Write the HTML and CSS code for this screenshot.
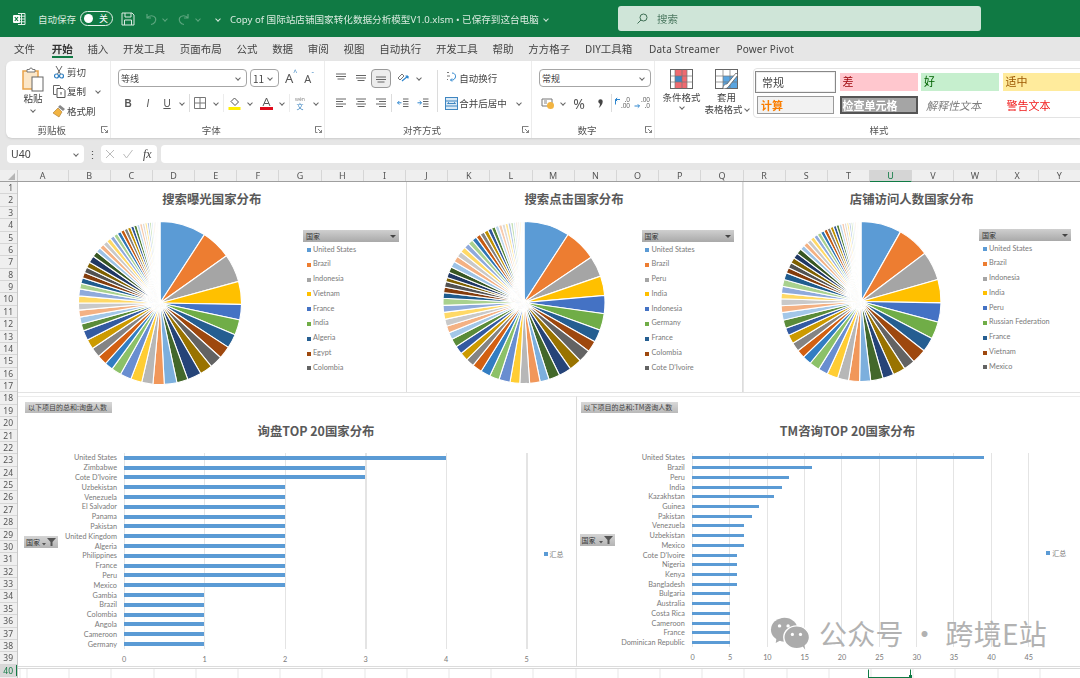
FILE: index.html
```html
<!DOCTYPE html>
<html lang="zh-CN">
<head>
<meta charset="utf-8">
<title>Excel</title>
<link rel="stylesheet" href="styles.css">
</head>
<body>
<div class="app">
  <header class="titlebar">
    <svg class="xl-icon" viewBox="0 0 14 14"><path d="M6 1.5h7v11H6M6 4.2h7M6 7h7M6 9.8h7M9.5 1.5v11" fill="none" stroke="#e3f0e8" stroke-width="1"/><rect x="1" y="3" width="7" height="8" rx="1" fill="#fff"/><path d="M2.8 5l3.2 4M6 5L2.8 9" stroke="#107c41" stroke-width="1.2"/></svg>
    <span class="autosave">自动保存</span>
    <span class="toggle"><i class="knob"></i><b>关</b></span>
    <svg class="save" viewBox="0 0 14 14"><path d="M1 1h10l2 2v10H1zM4 1v4h6V1M3.5 13V8h7v5" fill="none" stroke="#dcebe2" stroke-width="1"/></svg>
    <svg class="undo" viewBox="0 0 14 14"><path d="M3 2v4h4M3.2 6C5 3 10 3 11.5 6c1 3-1 6-4.500 6.500" fill="none" stroke="#5da67f" stroke-width="1.200"/></svg>
    <i class="mini-chev dim"></i>
    <svg class="redo" viewBox="0 0 14 14"><path d="M11 2v4H7M10.800 6C9 3 4 3 2.500 6c-1 3 1 6 4.500 6.500" fill="none" stroke="#5da67f" stroke-width="1.200"/></svg>
    <i class="mini-chev dim"></i>
    <span class="qa-more"><i class="mini-chev"></i></span>
    <span class="doc-title">Copy of 国际站店铺国家转化数据分析模型V1.0.xlsm • 已保存到这台电脑</span>
    <i class="mini-chev title-chev"></i>
    <div class="search">
      <svg class="search-ic" viewBox="0 0 12 12"><circle cx="7.500" cy="4.500" r="3.500" fill="none" stroke="#3f6f55" stroke-width="1"/><path d="M5 7L1.500 10.500" stroke="#3f6f55" stroke-width="1"/></svg>
      <span>搜索</span>
    </div>
  </header>

  <nav class="tabs">
    <span>文件</span><span class="active">开始</span><span>插入</span><span>开发工具</span><span>页面布局</span><span>公式</span><span>数据</span><span>审阅</span><span>视图</span><span>自动执行</span><span>开发工具</span><span>帮助</span><span>方方格子</span><span>DIY工具箱</span><span class="latin">Data Streamer</span><span class="latin">Power Pivot</span>
  </nav>

  <section class="ribbon">
    <div class="group g-clip">
      <div class="clip-body">
        <div class="paste">
          <svg class="paste-ic" viewBox="0 0 22 25"><path d="M1 4h15v18H1z" fill="#fbe6c8" stroke="#e8a24a" stroke-width="1.500"/><path d="M5 5V2.500h2.500a1.500 1.500 0 0 1 3 0H13V5z" fill="#fff" stroke="#777"/><rect x="10" y="10" width="11" height="14" fill="#fff" stroke="#666"/></svg>
          <span>粘贴</span>
          <i class="mini-chev"></i>
        </div>
        <div class="clip-list">
          <div class="clip-row"><svg class="ic14" viewBox="0 0 14 14"><path d="M4 1l4.500 8M10 1L5.500 9" stroke="#666" fill="none"/><circle cx="4.500" cy="11" r="2" fill="none" stroke="#2f7fc1" stroke-width="1.200"/><circle cx="9.500" cy="11" r="2" fill="none" stroke="#2f7fc1" stroke-width="1.200"/></svg><span>剪切</span></div>
          <div class="clip-row"><svg class="ic14" viewBox="0 0 14 14"><path d="M1.500 1.500h6l1 1v2M1.500 1.500v9h3" fill="none" stroke="#666"/><path d="M5 4.500h6l2 2v7H5z" fill="#fff" stroke="#555"/><path d="M8 9h2M9 8v3" stroke="#888"/></svg><span>复制</span><i class="mini-chev copy-chev"></i></div>
          <div class="clip-row"><svg class="ic14" viewBox="0 0 14 14"><path d="M8 1l5 4-2 2-5-4z" fill="#888"/><path d="M6 4l4 4-3 5-6-4z" fill="#f2b441" stroke="#a8752a" stroke-width=".6"/></svg><span>格式刷</span></div>
        </div>
      </div>
      <div class="grp-foot">剪贴板</div>
      <svg class="launcher" viewBox="0 0 7 7"><path d="M.5 3V.5h6M.5 .5v6h2M3 3l3.500 3.500M6.500 4v2.500H4" fill="none" stroke="#666" stroke-width=".8"/></svg>
    </div>

    <div class="group g-font">
      <div class="row1">
        <div class="select font-select"><span>等线</span><i class="mini-chev"></i></div>
        <div class="select size-select"><span>11</span><i class="mini-chev"></i></div>
        <span class="grow-a">A<sup>^</sup></span>
        <span class="shrink-a">A<sup>ˇ</sup></span>
      </div>
      <div class="row2">
        <span class="tool fmt bold">B</span>
        <span class="tool fmt italic">I</span>
        <span class="tool fmt under narrow">U</span>
        <span class="chev-box"><i class="mini-chev"></i></span>
        <i class="vsep"></i>
        <span class="tool"><svg class="ic12" viewBox="0 0 12 12"><path d="M.5 .5h11v11H.5zM.5 6h11M6 .5v11" fill="none" stroke="#777"/></svg></span>
        <span class="chev-box"><i class="mini-chev"></i></span>
        <i class="vsep faint"></i>
        <span class="tool"><svg class="ic13" viewBox="0 0 13 13"><path d="M6.500 1l4 4-3.500 3.500-4-4z" fill="#fff" stroke="#555"/><rect x=".5" y="10" width="12" height="3" fill="#ffee00"/></svg></span>
        <span class="chev-box"><i class="mini-chev"></i></span>
        <span class="tool"><svg class="ic13" viewBox="0 0 13 13"><path d="M3 9l3.500-8L10 9M4.200 6.500h4.600" fill="none" stroke="#555"/><rect x="0" y="10" width="13" height="3" fill="#e00b1c"/></svg></span>
        <span class="chev-box"><i class="mini-chev"></i></span>
        <i class="vsep faint"></i>
        <span class="tool wen"><small>wén</small><b>文</b></span>
        <span class="chev-box"><i class="mini-chev"></i></span>
      </div>
      <div class="grp-foot">字体</div>
      <svg class="launcher" viewBox="0 0 7 7"><path d="M.5 3V.5h6M.5 .5v6h2M3 3l3.500 3.500M6.500 4v2.500H4" fill="none" stroke="#666" stroke-width=".8"/></svg>
    </div>

    <div class="group g-align">
      <div class="align-body">
        <div class="align-left">
          <div class="row1 tight">
            <span class="tool"><svg class="ic12" viewBox="0 0 12 10"><path d="M1 1h10M1 3.500h10M2.500 6h7" stroke="#666"/></svg></span>
            <span class="tool"><svg class="ic12" viewBox="0 0 12 10"><path d="M1 2.500h10M1 5h10M2.500 7.500h7" stroke="#666"/></svg></span>
            <span class="tool on"><svg class="ic12" viewBox="0 0 12 10"><path d="M1 4h10M1 6.500h10M2.500 9h7" stroke="#666"/></svg></span>
            <i class="vsep clear"></i>
            <span class="tool"><svg class="ic14" viewBox="0 0 14 14"><path d="M2 7l4-4 2 2-4 4z" fill="none" stroke="#777"/><path d="M6 10l6-5M12 5H9.500M12 5v2.500" stroke="#2f87cf" fill="none" stroke-width="1.200"/></svg></span>
            <span class="chev-box"><i class="mini-chev"></i></span>
          </div>
          <div class="row2">
            <span class="tool"><svg class="ic12" viewBox="0 0 12 10"><path d="M1 1h10M1 3.500h7M1 6h10M1 8.500h7" stroke="#666"/></svg></span>
            <span class="tool"><svg class="ic12" viewBox="0 0 12 10"><path d="M1 1h10M2.500 3.500h7M1 6h10M2.500 8.500h7" stroke="#666"/></svg></span>
            <span class="tool"><svg class="ic12" viewBox="0 0 12 10"><path d="M1 1h10M4 3.500h7M1 6h10M4 8.500h7" stroke="#666"/></svg></span>
            <i class="vsep"></i>
            <span class="tool"><svg class="ic12" viewBox="0 0 12 10"><path d="M6 1h5.500M6 3.500h5.500M6 6h5.500M6 8.500h5.500" stroke="#666"/><path d="M4.500 4.800H.5M2.300 3L.5 4.800l1.800 1.800" stroke="#2f87cf" fill="none"/></svg></span>
            <span class="tool"><svg class="ic12" viewBox="0 0 12 10"><path d="M6 1h5.500M6 3.500h5.500M6 6h5.500M6 8.500h5.500" stroke="#666"/><path d="M.5 4.800h4M2.700 3l1.800 1.800-1.800 1.800" stroke="#2f87cf" fill="none"/></svg></span>
          </div>
        </div>
        <i class="vsep tall"></i>
        <div class="align-right">
          <div class="row1 tight">
            <span class="tool"><svg class="ic14" viewBox="0 0 14 14"><path d="M3 1.500h2M3 5h3M3 8.500h1" stroke="#777"/><path d="M8 2c4 0 5 5 1 7H6.500M8 7.500L6.500 9 8 10.500" fill="none" stroke="#2f87cf"/></svg></span>
            <span class="cmd">自动换行</span>
          </div>
          <div class="row2">
            <span class="tool"><svg class="ic13" viewBox="0 0 13 13"><rect x=".5" y=".5" width="12" height="12" fill="#dbeaf6" stroke="#3f86c1"/><path d="M.5 4h12M.5 9h12" stroke="#3f86c1"/><path d="M2.500 6.500h8M2.500 6.500l1.500-1.200M10.500 6.500L9 5.300" stroke="#3f86c1" fill="none"/></svg></span>
            <span class="cmd">合并后居中</span>
            <span class="chev-box merge-chev"><i class="mini-chev"></i></span>
          </div>
        </div>
      </div>
      <div class="grp-foot">对齐方式</div>
      <svg class="launcher" viewBox="0 0 7 7"><path d="M.5 3V.5h6M.5 .5v6h2M3 3l3.500 3.500M6.500 4v2.500H4" fill="none" stroke="#666" stroke-width=".8"/></svg>
    </div>

    <div class="group g-num">
      <div class="row1">
        <div class="select num-select"><span>常规</span><i class="mini-chev"></i></div>
      </div>
      <div class="row2">
        <span class="tool"><svg class="ic14" viewBox="0 0 14 14"><path d="M1 3h10v7H1z" fill="#fff" stroke="#777"/><path d="M3 5h3M3 7h3" stroke="#888"/><circle cx="9.500" cy="9.500" r="3.500" fill="#f2b441"/></svg></span>
        <span class="chev-box slim"><i class="mini-chev"></i></span>
        <span class="tool percent">%</span>
        <span class="tool"><svg class="comma-ic" viewBox="0 0 8 12"><path d="M1.500 3.500a2.500 2.500 0 1 1 5 0c0 3-1.500 5.500-4.500 7.500 1-2 1.500-3 1.300-4.800C2.300 6 1.500 5 1.500 3.500z" fill="#444"/></svg></span>
        <i class="vsep"></i>
        <span class="tool dec"><svg class="arrow-ic" viewBox="0 0 7 12"><path d="M6 2.500H1.500M3.200 .8L1.500 2.500l1.700 1.700M1.500 2.500v5" fill="none" stroke="#2f87cf"/></svg><b>.0<br>.00</b></span>
        <span class="tool dec"><svg class="arrow-ic" viewBox="0 0 7 12"><path d="M.5 9h5M3.800 7.300L5.500 9l-1.700 1.700" fill="none" stroke="#2f87cf"/></svg><b>.00<br>.0</b></span>
      </div>
      <div class="grp-foot">数字</div>
      <svg class="launcher" viewBox="0 0 7 7"><path d="M.5 3V.5h6M.5 .5v6h2M3 3l3.500 3.500M6.500 4v2.500H4" fill="none" stroke="#666" stroke-width=".8"/></svg>
    </div>

    <div class="group g-style">
      <div class="style-body">
        <div class="big-btn">
          <svg class="big-ic" viewBox="0 0 23 20"><rect x=".5" y=".5" width="22" height="19" fill="#fff" stroke="#666"/><path d="M5 1h12v6H5zM5 13h12v6H5zM12 7h5v6h-5z" fill="#ef6a70"/><rect x="5" y="7" width="7" height="6" fill="#3f86c1"/><path d="M5 .5v19M12 .5v19M17 .5v19M.5 7h22M.5 13h22" stroke="#777" stroke-width=".7"/></svg>
          <span>条件格式</span>
          <i class="mini-chev"></i>
        </div>
        <div class="big-btn">
          <svg class="big-ic" viewBox="0 0 23 20"><rect x=".5" y=".5" width="22" height="19" fill="#fff" stroke="#666"/><path d="M8 7h14v12H8z" fill="#5aa5e0"/><path d="M8 .5v19M15 .5v19M.5 7h22M.5 13h22" stroke="#777" stroke-width=".7"/><path d="M8 20c0-4 2-5 4-5l9-11 2 2-9 11c-1 2-3 3-6 3z" fill="#fff" stroke="#555" stroke-width=".7"/></svg>
          <span>套用</span>
          <span class="with-chev">表格格式<i class="mini-chev"></i></span>
        </div>
        <div class="gallery">
          <div class="sty normal">常规</div>
          <div class="sty bad">差</div>
          <div class="sty good">好</div>
          <div class="sty neutral">适中</div>
          <div class="sty calc">计算</div>
          <div class="sty check">检查单元格</div>
          <div class="sty explain">解释性文本</div>
          <div class="sty warn">警告文本</div>
        </div>
      </div>
      <div class="grp-foot style-foot">样式</div>
    </div>
  </section>

  <section class="formula">
    <div class="namebox"><span>U40</span><i class="mini-chev"></i></div>
    <span class="fdots">⋮</span>
    <div class="fbtns">
      <svg class="ic10" viewBox="0 0 10 10"><path d="M1 1l8 8M9 1L1 9" stroke="#bbb"/></svg>
      <svg class="ic10" viewBox="0 0 10 10"><path d="M.5 5l3 4L9.500 1" stroke="#bbb" fill="none"/></svg>
      <span class="fx">fx</span>
    </div>
    <div class="finput"></div>
  </section>

  <section class="sheet">
    <div class="colhead">
      <div class="corner"><i></i></div>
      <span class="col-a">A</span><span>B</span><span>C</span><span>D</span><span>E</span><span>F</span><span>G</span><span>H</span><span>I</span><span>J</span><span>K</span><span>L</span><span>M</span><span>N</span><span>O</span><span>P</span><span>Q</span><span>R</span><span>S</span><span>T</span><span class="col-sel">U</span><span>V</span><span>W</span><span>X</span><span>Y</span>
    </div>
    <div class="sheet-body">
      <div class="rowhead">
        <span>1</span><span>2</span><span>3</span><span>4</span><span>5</span><span>6</span><span>7</span><span>8</span><span>9</span><span>10</span><span>11</span><span>12</span><span>13</span><span>14</span><span>15</span><span>16</span><span>17</span><span>18</span><span>19</span><span>20</span><span>21</span><span>22</span><span>23</span><span>24</span><span>25</span><span>26</span><span>27</span><span>28</span><span>29</span><span>30</span><span>31</span><span>32</span><span>33</span><span>34</span><span>35</span><span>36</span><span>37</span><span>38</span><span>39</span><span class="row-sel">40</span>
      </div>
      <div class="canvas">
        <div class="pies">
          <article class="pie-panel wide">
            <h2>搜索曝光国家分布</h2>
            <div class="pie-body">
              <svg class="pie" id="pie1" viewBox="0 0 164 164"></svg>
              <div class="legend">
                <div class="legend-head"><span>国家</span><i class="tri"></i></div>
                <ul>
                  <li class="c0">United States</li><li class="c1">Brazil</li><li class="c2">Indonesia</li><li class="c3">Vietnam</li><li class="c4">France</li><li class="c5">India</li><li class="c6">Algeria</li><li class="c7">Egypt</li><li class="c8">Colombia</li>
                </ul>
              </div>
            </div>
          </article>
          <article class="pie-panel mid">
            <h2>搜索点击国家分布</h2>
            <div class="pie-body">
              <svg class="pie" id="pie2" viewBox="0 0 164 164"></svg>
              <div class="legend">
                <div class="legend-head"><span>国家</span><i class="tri"></i></div>
                <ul>
                  <li class="c0">United States</li><li class="c1">Brazil</li><li class="c2">Peru</li><li class="c3">India</li><li class="c4">Indonesia</li><li class="c5">Germany</li><li class="c6">France</li><li class="c7">Colombia</li><li class="c8">Cote D'Ivoire</li>
                </ul>
              </div>
            </div>
          </article>
          <article class="pie-panel last">
            <h2>店铺访问人数国家分布</h2>
            <div class="pie-body">
              <svg class="pie" id="pie3" viewBox="0 0 164 164"></svg>
              <div class="legend">
                <div class="legend-head"><span>国家</span><i class="tri"></i></div>
                <ul>
                  <li class="c0">United States</li><li class="c1">Brazil</li><li class="c2">Indonesia</li><li class="c3">India</li><li class="c4">Peru</li><li class="c5">Russian Federation</li><li class="c6">France</li><li class="c7">Vietnam</li><li class="c8">Mexico</li>
                </ul>
              </div>
            </div>
          </article>
        </div>

        <div class="bars">
          <article class="bar-panel inquiry">
            <div class="field-btn">以下项目的总和:询盘人数</div>
            <h2>询盘TOP 20国家分布</h2>
            <div class="bar-chart">
              <div class="filter-btn"><span>国家</span><svg class="funnel" viewBox="0 0 14 8"><path d="M0 5h4L2 7.500zM5 0h9L10.500 4v4h-2V4z" fill="#555"/></svg></div>
              <div class="plot">
                <ul class="bar-list">
                  <li><span>United States</span><b><i style="--v:4"></i></b></li>
                  <li><span>Zimbabwe</span><b><i style="--v:3"></i></b></li>
                  <li><span>Cote D'Ivoire</span><b><i style="--v:3"></i></b></li>
                  <li><span>Uzbekistan</span><b><i style="--v:2"></i></b></li>
                  <li><span>Venezuela</span><b><i style="--v:2"></i></b></li>
                  <li><span>El Salvador</span><b><i style="--v:2"></i></b></li>
                  <li><span>Panama</span><b><i style="--v:2"></i></b></li>
                  <li><span>Pakistan</span><b><i style="--v:2"></i></b></li>
                  <li><span>United Kingdom</span><b><i style="--v:2"></i></b></li>
                  <li><span>Algeria</span><b><i style="--v:2"></i></b></li>
                  <li><span>Philippines</span><b><i style="--v:2"></i></b></li>
                  <li><span>France</span><b><i style="--v:2"></i></b></li>
                  <li><span>Peru</span><b><i style="--v:2"></i></b></li>
                  <li><span>Mexico</span><b><i style="--v:2"></i></b></li>
                  <li><span>Gambia</span><b><i style="--v:1"></i></b></li>
                  <li><span>Brazil</span><b><i style="--v:1"></i></b></li>
                  <li><span>Colombia</span><b><i style="--v:1"></i></b></li>
                  <li><span>Angola</span><b><i style="--v:1"></i></b></li>
                  <li><span>Cameroon</span><b><i style="--v:1"></i></b></li>
                  <li><span>Germany</span><b><i style="--v:1"></i></b></li>
                </ul>
                <div class="ticks"><span>0</span><span>1</span><span>2</span><span>3</span><span>4</span><span>5</span></div>
              </div>
              <div class="bar-legend"><i></i>汇总</div>
            </div>
          </article>
          <article class="bar-panel tm">
            <div class="field-btn">以下项目的总和:TM咨询人数</div>
            <h2>TM咨询TOP 20国家分布</h2>
            <div class="bar-chart">
              <div class="filter-btn"><span>国家</span><svg class="funnel" viewBox="0 0 14 8"><path d="M0 5h4L2 7.500zM5 0h9L10.500 4v4h-2V4z" fill="#555"/></svg></div>
              <div class="plot">
                <ul class="bar-list">
                  <li><span>United States</span><b><i style="--v:39"></i></b></li>
                  <li><span>Brazil</span><b><i style="--v:16"></i></b></li>
                  <li><span>Peru</span><b><i style="--v:13"></i></b></li>
                  <li><span>India</span><b><i style="--v:12"></i></b></li>
                  <li><span>Kazakhstan</span><b><i style="--v:11"></i></b></li>
                  <li><span>Guinea</span><b><i style="--v:9"></i></b></li>
                  <li><span>Pakistan</span><b><i style="--v:8"></i></b></li>
                  <li><span>Venezuela</span><b><i style="--v:7"></i></b></li>
                  <li><span>Uzbekistan</span><b><i style="--v:7"></i></b></li>
                  <li><span>Mexico</span><b><i style="--v:7"></i></b></li>
                  <li><span>Cote D'Ivoire</span><b><i style="--v:6"></i></b></li>
                  <li><span>Nigeria</span><b><i style="--v:6"></i></b></li>
                  <li><span>Kenya</span><b><i style="--v:6"></i></b></li>
                  <li><span>Bangladesh</span><b><i style="--v:6"></i></b></li>
                  <li><span>Bulgaria</span><b><i style="--v:5"></i></b></li>
                  <li><span>Australia</span><b><i style="--v:5"></i></b></li>
                  <li><span>Costa Rica</span><b><i style="--v:5"></i></b></li>
                  <li><span>Cameroon</span><b><i style="--v:5"></i></b></li>
                  <li><span>France</span><b><i style="--v:5"></i></b></li>
                  <li><span>Dominican Republic</span><b><i style="--v:5"></i></b></li>
                </ul>
                <div class="ticks"><span>0</span><span>5</span><span>10</span><span>15</span><span>20</span><span>25</span><span>30</span><span>35</span><span>40</span><span>45</span></div>
              </div>
              <div class="bar-legend"><i></i>汇总</div>
            </div>
          </article>
        </div>

        <div class="row40"><div class="cell-sel"><i></i></div></div>

        <div class="watermark">
          <svg class="wechat" viewBox="0 0 42 34"><ellipse cx="15" cy="13" rx="14" ry="12.500" fill="#ababab"/><path d="M7 21l-1 6 7-4z" fill="#ababab"/><ellipse cx="28" cy="21" rx="13.500" ry="12" fill="#ababab" stroke="#fff" stroke-width="1.500"/><path d="M34 30l3 4-1-6z" fill="#ababab"/><circle cx="10" cy="9" r="1.800" fill="#fff"/><circle cx="19" cy="9" r="1.800" fill="#fff"/><circle cx="23.500" cy="18" r="1.700" fill="#fff"/><circle cx="32" cy="18" r="1.700" fill="#fff"/></svg>
          <span>公众号 · 跨境E站</span>
        </div>
      </div>
    </div>
  </section>
</div>
<script src="script.js"></script>
</body>
</html>
```
FILE: styles.css
```css
* { box-sizing: border-box; margin: 0; padding: 0; }
html, body { width: 1080px; height: 678px; overflow: hidden; }
body { font-family: "Noto Sans CJK SC", "Noto Sans", sans-serif; background: #e6e6e6; color: #444; font-size: 10px; }
ul { list-style: none; }
.app { width: 1080px; height: 678px; overflow: hidden; display: flex; flex-direction: column; filter: blur(.3px); }

.mini-chev { display: inline-block; width: 4px; height: 4px; border-right: 1px solid #666; border-bottom: 1px solid #666; transform: rotate(45deg); flex: none; }

/* title bar */
.titlebar { height: 37px; flex: none; background: #107a44; color: #d9eadf; display: flex; align-items: center; padding-left: 12px; }
.xl-icon { width: 14px; height: 14px; }
.autosave { margin-left: 12px; width: 38px; font-size: 9.5px; white-space: nowrap; }
.toggle { margin-left: 4px; width: 33px; height: 15px; border: 1px solid #e6f2ea; border-radius: 8px; display: flex; align-items: center; justify-content: space-between; padding: 0 4px 0 3px; }
.knob { width: 9px; height: 9px; border-radius: 50%; background: #fff; }
.toggle b { font-weight: 400; font-size: 9px; color: #fff; }
.save { width: 14px; height: 14px; margin-left: 8px; }
.undo { width: 14px; height: 14px; margin-left: 9px; }
.redo { width: 14px; height: 14px; margin-left: 10px; }
.mini-chev.dim { border-color: #5da67f; margin-left: 5px; }
.qa-more { margin-left: 14px; width: 8px; display: flex; justify-content: center; }
.qa-more .mini-chev { border-color: #d9eadf; }
.doc-title { margin-left: 8px; font-size: 9.6px; white-space: nowrap; font-family: "Noto Sans", "Noto Sans CJK SC", sans-serif; }
.title-chev { border-color: #cfe5d8; margin-left: 5px; }
.search { position: absolute; left: 618px; top: 6px; width: 363px; height: 25px; background: #cfe5d8; border-radius: 3px; display: flex; align-items: center; padding-left: 18px; color: #4d7a62; font-size: 10.5px; }
.search-ic { width: 12px; height: 12px; margin-right: 9px; }

/* tabs */
.tabs { height: 23px; flex: none; display: flex; align-items: center; gap: 14.7px; padding-left: 14px; font-size: 10.5px; color: #444; white-space: nowrap; }
.tabs span { position: relative; }
.tabs .active { font-weight: 700; color: #333; margin-left: 2px; }
.tabs .active::after { content: ""; position: absolute; left: 0; right: 0; bottom: -2px; height: 2px; background: #107a44; }
.tabs .latin { font-family: "Noto Sans", sans-serif; font-size: 10px; margin-left: 2px; letter-spacing: .2px; }

/* ribbon */
.ribbon { margin: 1px 0 0 6px; height: 77px; flex: none; background: #fff; border-radius: 6px 0 0 6px; display: flex; overflow: hidden; box-shadow: 0 1px 2px #ccc; }
.group { position: relative; height: 77px; display: flex; flex-direction: column; flex: none; border-right: 1px solid #ececec; }
.grp-foot { position: absolute; left: 0; right: 0; top: 62px; height: 14px; line-height: 14px; text-align: center; padding-right: 12px; font-size: 9.5px; color: #555; }
.launcher { position: absolute; right: 2px; top: 65px; width: 7px; height: 7px; }
.g-clip { width: 104.5px; }
.g-font { width: 214.5px; padding-left: 1.5px; }
.g-align { width: 207px; padding-left: 5.500px; }
.g-num { width: 123px; padding-left: 5px; }
.g-style { flex: 1; border-right: 0; }

.clip-body { display: flex; padding-top: 6px; }
.paste { margin-left: 15px; width: 24px; display: flex; flex-direction: column; align-items: center; font-size: 9.5px; }
.paste-ic { width: 22px; height: 25px; }
.paste span { line-height: 12px; margin-top: 0; white-space: nowrap; }
.paste .mini-chev { margin-top: 4px; }
.clip-list { margin-left: 7px; margin-top: -5px; }
.clip-row { height: 19.500px; display: flex; align-items: center; gap: 1px; white-space: nowrap; font-size: 9.5px; }
.ic14 { width: 14px; height: 14px; flex: none; }
.ic13 { width: 13px; height: 13px; flex: none; }
.ic12 { width: 12px; height: 12px; flex: none; }
.ic10 { width: 10px; height: 10px; flex: none; }
.copy-chev { margin-left: 9px; }

.row1 { margin-top: 8px; height: 18px; display: flex; align-items: center; flex: none; }
.row2 { margin-top: 8px; height: 16px; display: flex; align-items: center; flex: none; }
.select { height: 18px; background: #fff; border: 1px solid #a6a6a6; border-radius: 4px; display: flex; align-items: center; justify-content: space-between; padding: 0 6px 0 2px; font-size: 9px; flex: none; }
.font-select { width: 129px; margin-left: 6px; }
.size-select { width: 29px; margin-left: 3px; font-size: 10px; }
.num-select { width: 112px; margin-left: 2px; }
.grow-a, .shrink-a { font-family: "Noto Sans", sans-serif; color: #555; display: flex; }
.grow-a { margin-left: 6px; font-size: 13px; }
.shrink-a { margin-left: 7px; font-size: 11px; }
.grow-a sup { font-size: 7px; line-height: 8px; color: #3f86c1; }
.shrink-a sup { font-size: 7px; line-height: 8px; color: #3f86c1; }
.tool { width: 20px; height: 16px; flex: none; display: flex; align-items: center; justify-content: center; }
.tool.narrow { width: 18px; }
.tool.on { height: 19px; background: #ededed; border: 1px solid #9a9a9a; border-radius: 4px; }
.fmt { font-family: "Liberation Sans", sans-serif; font-size: 10px; color: #555; }
.bold { font-weight: 700; }
.italic { font-style: italic; }
.under { text-decoration: underline; }
.chev-box { width: 12px; height: 16px; display: flex; align-items: center; justify-content: center; flex: none; }
.chev-box.slim { width: 10px; }
.vsep { width: 1px; height: 18px; margin: 0 .5px; background: #dcdcdc; flex: none; }
.vsep.faint { background: #ececec; }
.vsep.clear { background: transparent; }
.vsep.tall { height: 42px; margin: 9px 3px 0 2px; }
.wen { flex-direction: column; line-height: 7px; }
.wen small { font-size: 5px; color: #888; font-family: "Noto Sans", sans-serif; }
.wen b { font-size: 7px; font-weight: 400; color: #3f86c1; }

.g-font .row2 { margin-left: 6px; }
.align-body { display: flex; }
.align-left { width: 105px; }
.align-right { width: 90px; }
.cmd { font-size: 9.500px; white-space: nowrap; margin-left: -2px; }
.merge-chev { margin-left: 6px; }
.percent { width: 22px; font-family: "Noto Sans", sans-serif; font-size: 14px; color: #555; }
.comma-ic { width: 7px; height: 11px; }
.arrow-ic { width: 7px; height: 12px; flex: none; }
.dec { font-family: "Noto Sans", sans-serif; font-size: 6.5px; line-height: 6.500px; color: #666; }
.dec b { font-weight: 400; text-align: right; }
.g-num .row2 { margin-left: 1px; }

.style-body { display: flex; padding-left: 4px; }
.big-btn { width: 45px; margin-top: 8px; display: flex; flex-direction: column; align-items: center; font-size: 9.5px; line-height: 12px; white-space: nowrap; flex: none; }
.big-ic { width: 23px; height: 20px; margin-bottom: 2px; flex: none; }
.big-btn > .mini-chev { margin-top: 2px; }
.with-chev { display: flex; align-items: center; gap: 2px; }
.gallery { margin: 7px 0 0 4px; height: 50px; width: 340px; flex: none; border: 1px solid #e3e3e3; border-radius: 4px 0 0 4px; padding: 2px 0 0 1px; display: grid; grid-template-columns: 81px 78px 78px 78px; grid-template-rows: 22px 19px; gap: 2px 3.500px; align-items: center; }
.sty { font-size: 11px; line-height: 16px; padding-left: 3px; white-space: nowrap; overflow: hidden; }
.normal { height: 22px; line-height: 20px; padding-left: 6px; background: #fff; border: 1px solid #888; color: #444; box-shadow: inset 0 0 0 1px #eee; }
.bad { height: 18px; background: #ffc7ce; color: #9c0006; }
.good { height: 18px; background: #c6efce; color: #006100; }
.neutral { height: 18px; background: #ffeb9c; color: #9c5700; }
.calc { height: 18px; margin: 0 2px; background: #f2f2f2; border: 1px solid #9a9a9a; color: #fa7d00; font-weight: 700; }
.check { height: 18px; background: #a5a5a5; border: 2px solid #555; color: #fff; font-weight: 700; padding-left: 1px; line-height: 14px; }
.explain { font-style: italic; color: #7f7f7f; padding-left: 5px; }
.warn { color: #f01818; padding-left: 4px; }
.style-foot { left: 0; width: 448px; right: auto; padding-right: 0; }

/* formula */
.formula { margin-top: 7px; height: 18px; flex: none; display: flex; padding-left: 7px; }
.namebox { width: 77px; background: #fff; border-radius: 4px; display: flex; align-items: center; justify-content: space-between; padding: 0 6px 0 4px; font-family: "Noto Sans", sans-serif; font-size: 10.500px; color: #444; }
.fdots { width: 17px; text-align: center; line-height: 18px; font-size: 11px; color: #555; }
.fbtns { width: 56px; background: #fff; border-radius: 4px; display: flex; align-items: center; gap: 8px; padding-left: 4px; }
.fx { font-family: "Liberation Serif", serif; font-style: italic; font-size: 12px; color: #444; margin-left: 2px; }
.finput { margin-left: 4px; flex: 1; background: #fff; border-radius: 4px 0 0 4px; }

/* sheet */
.sheet { margin-top: 7px; flex: 1; min-height: 0; display: flex; flex-direction: column; background: #fff; }
.colhead { height: 12px; flex: none; display: flex; background: #efefef; border-bottom: 1px solid #9f9f9f; }
.corner { width: 18px; border-right: 1px solid #ccc; position: relative; flex: none; }
.corner i { position: absolute; right: 2px; bottom: 1px; border-style: solid; border-width: 0 0 7px 7px; border-color: transparent transparent #b5b5b5 transparent; }
.colhead span { width: 42.200px; flex: none; text-align: center; line-height: 11px; font-family: "Noto Sans", sans-serif; font-size: 9px; color: #555; border-right: 1px solid #d6d6d6; }
.colhead .col-a { width: 50.500px; }
.colhead .col-sel { background: #d5d5d5; border-bottom: 1px solid #107a44; height: 12px; color: #107a44; }
.sheet-body { flex: 1; min-height: 0; display: flex; }
.rowhead { width: 18px; flex: none; background: #efefef; border-right: 1px solid #c6c6c6; display: flex; flex-direction: column; overflow: hidden; }
.rowhead span { height: 12.380px; flex: none; line-height: 12px; text-align: right; padding-right: 4px; font-family: "Noto Sans", sans-serif; font-size: 8.500px; color: #555; border-bottom: 1px solid #d6d6d6; }
.rowhead .row-sel { background: #d8d8d8; color: #107a44; box-shadow: inset -1px 0 0 #107a44; }

.canvas { position: relative; flex: 1; min-width: 0; display: flex; flex-direction: column; background: #fff; }
.pies { height: 211px; flex: none; display: flex; border-bottom: 1px solid #e3e3e3; }
.pie-panel { height: 210px; flex: none; border-right: 1px solid #dcdcdc; }
.pie-panel.wide { width: 388.500px; }
.pie-panel.mid { width: 336px; }
.pie-panel.last { flex: 1; border-right: 0; border-left: 1px solid #e6e6e6; }
.pie-panel h2, .bar-panel h2 { font-size: 12.400px; font-weight: 700; color: #595959; text-align: center; line-height: 18px; padding-top: 8px; height: 26px; }
.pie-body { margin-top: 13px; display: flex; align-items: flex-start; }
.pie { width: 164px; height: 164px; flex: none; }
.wide .pie-body { padding-left: 60px; gap: 61px; }
.mid .pie-body { padding-left: 35px; gap: 36px; }
.last .pie-body { padding-left: 35.500px; gap: 36px; }
.legend { width: 96px; margin-top: 9px; }
.mid .legend, .last .legend { width: 92px; }
.last .legend { margin-top: 8px; }
.legend-head { height: 12px; background: linear-gradient(#cfcfcf, #a9a9a9); display: flex; align-items: center; justify-content: space-between; padding: 0 3px; font-size: 7px; color: #333; }
.tri { border-style: solid; border-width: 3px 3px 0 3px; border-color: #444 transparent transparent transparent; }
.legend ul { margin-top: .5px; }
.legend li { position: relative; height: 14.800px; line-height: 14.800px; padding-left: 10px; font-family: Lato, sans-serif; font-size: 7.300px; color: #7a7a7a; white-space: nowrap; }
.legend li::before { content: ""; position: absolute; left: 3.500px; top: 5.500px; width: 4px; height: 4px; background: var(--c); }
.c0 { --c: #5b9bd5; } .c1 { --c: #ed7d31; } .c2 { --c: #a5a5a5; } .c3 { --c: #ffc000; } .c4 { --c: #4472c4; } .c5 { --c: #70ad47; } .c6 { --c: #255e91; } .c7 { --c: #9e480e; } .c8 { --c: #636363; }

.bars { margin-top: 3px; height: 272px; flex: none; display: flex; }
.bar-panel { height: 271px; border-bottom: 1px solid #dcdcdc; border-top: 1px solid #ececec; flex: none; }
.inquiry { width: 557.500px; padding-left: 6px; --unit: 80.500px; --tick: 80.500px; --label: 59px; --gap: 6.500px; --track: 410px; --rowh: 9.800px; --bar: 4px; }
.tm { flex: 1; padding-left: 3px; border-left: 1px solid #dcdcdc; --unit: 7.470px; --tick: 37.350px; --label: 70.300px; --gap: 7.400px; --track: 342px; --rowh: 9.720px; --bar: 3px; }
.field-btn { margin: 5px 0 0 1px; height: 11px; padding: 0 3px; line-height: 11px; font-size: 7px; color: #444; background: linear-gradient(#d8d8d8, #b9b9b9); white-space: nowrap; }
.inquiry .field-btn { width: 87px; }
.tm .field-btn { width: 97px; margin-left: 1px; }
.bar-panel h2 { height: 18px; padding: 0; margin-top: 9px; }
.inquiry h2 { width: 584px; }
.tm h2 { width: 536px; }
.bar-chart { margin-top: 13px; display: flex; align-items: flex-start; }
.filter-btn { width: 34px; height: 12px; margin-top: 83px; flex: none; display: flex; align-items: center; justify-content: space-between; padding: 0 2px; background: linear-gradient(#d4d4d4, #b4b4b4); font-size: 7px; color: #333; }
.tm .filter-btn { width: 35px; margin-top: 81px; }
.funnel { width: 14px; height: 8px; }
.plot { flex: none; width: calc(var(--label) + var(--gap) + var(--track)); }
.bar-list li { display: flex; height: var(--rowh); align-items: center; gap: var(--gap); }
.bar-list span { width: var(--label); flex: none; text-align: right; font-family: Lato, sans-serif; font-size: 7.300px; line-height: 9px; color: #7a7a7a; white-space: nowrap; }
.bar-list b { width: var(--track); height: var(--rowh); flex: none; display: flex; align-items: center; background: repeating-linear-gradient(90deg, #e4e4e4 0 1px, transparent 1px var(--tick)); }
.bar-list i { display: block; height: var(--bar); width: calc(var(--v) * var(--unit)); background: #5b9bd5; }
.ticks { display: flex; margin-left: calc(var(--label) + var(--gap) - var(--tick) / 2 + .5px); margin-top: 6px; }
.ticks span { width: var(--tick); flex: none; text-align: center; font-family: Lato, sans-serif; font-size: 7.300px; line-height: 10px; color: #7a7a7a; }
.bar-legend { margin: 96px 0 0 10px; display: flex; align-items: center; gap: 2px; font-size: 7px; color: #7a7a7a; white-space: nowrap; }
.tm .bar-legend { margin: 95px 0 0 12px; }
.bar-legend i { width: 4px; height: 4px; background: #5b9bd5; }

.row40 { flex: 1; min-height: 0; border-top: 1px solid #d9d9d9; background: repeating-linear-gradient(90deg, #e6e6e6 0 1px, transparent 1px 42.200px); background-position: 8.500px 0; }
.cell-sel { position: relative; margin-left: 850px; width: 43px; height: 100%; border: 1px solid #107a44; border-top-color: transparent; }
.cell-sel i { position: absolute; right: -2px; bottom: -1px; width: 3px; height: 3px; background: #107a44; }

.watermark { position: absolute; left: 752px; top: 434px; display: flex; align-items: center; gap: 9px; color: #b2b2b2; font-size: 28px; line-height: 34px; letter-spacing: .3px; white-space: nowrap; }
.wechat { width: 40px; height: 33px; flex: none; }
```
FILE: script.js
```js
var COLORS = [
  '#5b9bd5','#ed7d31','#a5a5a5','#ffc000','#4472c4','#70ad47','#255e91','#9e480e','#636363','#997300','#264478','#43682b',
  '#7cafdd','#f1975a','#b7b7b7','#ffcd33','#698ed0','#8cc168','#327dc2','#d26012','#848484','#cc9a00','#335aa1','#5a8b39',
  '#a3c7e8','#f4b183','#c9c9c9','#ffd966','#8faadc','#a9d18e','#1f5c8e','#843c0c','#525252','#7f6000','#203864','#385723',
  '#9dc3e6','#f4b183','#c9c9c9','#ffd966','#8faadc','#a9d18e','#2e75b6','#c55a11','#7f7f7f','#bf9000','#2f5597','#548235',
  '#bdd7ee','#f8cbad','#dbdbdb','#ffe699','#b4c7e7','#c5e0b4','#deeaf6','#fbe5d6','#ededed','#fff2cc','#dae3f3','#e2f0d9'
];
var PIES = {
  pie1: { r: 81.5, a: [33,54.6,74.6,91,102,113,123,132,141,150,160,168,177,185,193,201,209,216,222,229,236,243,250,255,260,265,270,275,280,284,288,292,296,300,305,309] },
  pie2: { r: 81, a: [33,56,71,85,98,110,119,127,136,145,154,162,168.5,176,183,190,198,205,212,219,225,231,237,243,248,253,258,263,268,273,277,281,285,288,292,296] },
  pie3: { r: 80, a: [29.5,53,74,91,105,117.5,128,138.7,147,156,164,173,181,189,197,205,212,219.5,226,232,238.5,245,250.5,256.5,262,267,272,276,281,286,291,295,299,303,307,311] }
};
function bounds(head) {
  var out = head.slice(), n = COLORS.length - head.length, rest = 360 - head[head.length - 1], sum = 0, i;
  for (i = 0; i < n; i++) sum += 4 - 3.2 * i / (n - 1);
  var cur = head[head.length - 1];
  for (i = 0; i < n; i++) { cur += (4 - 3.2 * i / (n - 1)) / sum * rest; out.push(cur); }
  return out;
}
function pt(cx, cy, r, deg) {
  var t = deg * Math.PI / 180;
  return (cx + r * Math.sin(t)).toFixed(2) + ' ' + (cy - r * Math.cos(t)).toFixed(2);
}
Object.keys(PIES).forEach(function (id) {
  var cfg = PIES[id], svg = document.getElementById(id), list = bounds(cfg.a), prev = 0, cx = 82, cy = cfg.r + .5, html = '';
  list.forEach(function (end, i) {
    var large = end - prev > 180 ? 1 : 0;
    html += '<path d="M' + cx + ' ' + cy + 'L' + pt(cx, cy, cfg.r, prev) + 'A' + cfg.r + ' ' + cfg.r + ' 0 ' + large + ' 1 ' + pt(cx, cy, cfg.r, end) + 'Z" fill="' + COLORS[i] + '" stroke="#fff" stroke-width="1.100"/>';
    prev = end;
  });
  svg.innerHTML = html;
});
```
